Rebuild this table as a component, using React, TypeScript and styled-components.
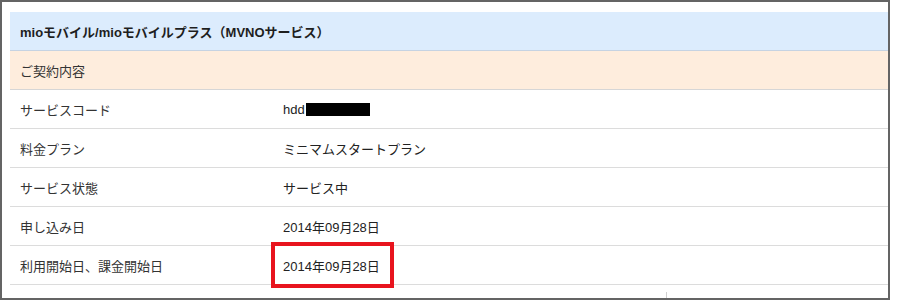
import styled, { createGlobalStyle } from 'styled-components';

const GlobalStyle = createGlobalStyle`
  html, body {
    margin: 0;
    padding: 0;
    background: #ffffff;
  }
  body {
    font-family: 'Liberation Sans', 'Noto Sans CJK JP', sans-serif;
  }
`;

interface IRow {
  label: string;
  value: string;
  redacted?: boolean;
  highlight?: boolean;
}

const rows: IRow[] = [
  { label: 'サービスコード', value: 'hdd', redacted: true },
  { label: '料金プラン', value: 'ミニマムスタートプラン' },
  { label: 'サービス状態', value: 'サービス中' },
  { label: '申し込み日', value: '2014年09月28日' },
  { label: '利用開始日、課金開始日', value: '2014年09月28日', highlight: true },
];

export default function App() {
  return (
    <>
      <GlobalStyle />
      <Frame>
        <Table>
          <TitleRow>mioモバイル/mioモバイルプラス（MVNOサービス）</TitleRow>
          <SectionRow>ご契約内容</SectionRow>
          {rows.map((row) => (
            <Row key={row.label}>
              <LabelCell>{row.label}</LabelCell>
              <ValueCell>
                {row.highlight ? (
                  <Highlight>{row.value}</Highlight>
                ) : (
                  <>
                    {row.value}
                    {row.redacted && <Redacted />}
                  </>
                )}
              </ValueCell>
            </Row>
          ))}
          <Row>
            <LabelCell />
            <SplitCell>
              <span />
              <SubCell />
            </SplitCell>
          </Row>
        </Table>
      </Frame>
    </>
  );
}

const Frame = styled.div`
  box-sizing: border-box;
  width: 890px;
  height: 300px;
  border: 2px solid #646464;
  padding: 10px 0 0 8px;
  overflow: hidden;
`;

const Table = styled.div`
  display: flex;
  flex-direction: column;
  font-size: 13px;
  color: #333333;
`;

const TitleRow = styled.div`
  height: 38px;
  display: flex;
  align-items: center;
  padding-left: 10px;
  background: #dcecfd;
  border-bottom: 1px solid #c6d3e2;
  font-weight: 700;
  color: #1e1e1e;
`;

const SectionRow = styled.div`
  height: 38px;
  display: flex;
  align-items: center;
  padding-left: 10px;
  background: #feeddd;
  border-bottom: 1px solid #d6d6d6;
`;

const Row = styled.div`
  display: grid;
  grid-template-columns: 263px 1fr;
  grid-template-rows: 38px;
  height: 38px;
  border-bottom: 1px solid #dcdcdc;
  flex-shrink: 0;
`;

const LabelCell = styled.div`
  display: flex;
  align-items: center;
  padding-left: 10px;
`;

const ValueCell = styled.div`
  display: flex;
  align-items: center;
  padding-left: 10px;
  height: 38px;
  color: #222222;
`;

const SplitCell = styled.div`
  display: grid;
  grid-template-columns: 393px 1fr;
`;

const SubCell = styled.div`
  border-left: 1px solid #d0d0d0;
  margin-top: 7px;
`;

const Redacted = styled.span`
  display: inline-block;
  width: 64px;
  height: 13px;
  background: #000000;
  margin-left: 1px;
`;

const Highlight = styled.span`
  display: inline-flex;
  align-items: center;
  flex-shrink: 0;
  box-sizing: border-box;
  height: 46px;
  width: 123px;
  margin-left: -12px;
  padding: 0 8px;
  border: 4px solid #e8141e;
`;
